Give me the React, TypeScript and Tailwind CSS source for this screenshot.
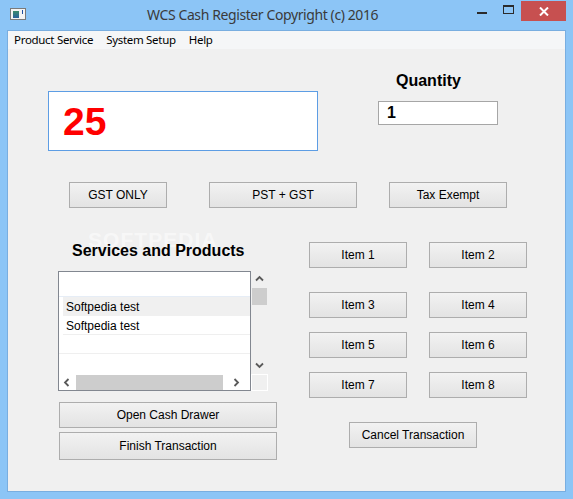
import React from 'react';

const sans = "font-['Liberation_Sans',Arial,sans-serif]";
const ui = "font-['Noto_Sans','Open_Sans',sans-serif]";

function Btn({ label, className = '' }: { label: string; className?: string }) {
  return (
    <button
      className={`h-[26px] border border-[#adadad] bg-gradient-to-b from-[#f2f2f2] to-[#e3e3e3] text-[12px] text-black ${sans} ${className}`}
    >
      {label}
    </button>
  );
}

function Chevron({ dir }: { dir: 'up' | 'down' | 'left' | 'right' }) {
  const d = {
    up: 'M1 5.5 L4.5 2 L8 5.5',
    down: 'M1 2.5 L4.5 6 L8 2.5',
    left: 'M5.5 1 L2 4.5 L5.5 8',
    right: 'M2.5 1 L6 4.5 L2.5 8',
  }[dir];
  return (
    <svg width="9" height="9" viewBox="0 0 9 9">
      <path d={d} fill="none" stroke="#5a5a5a" strokeWidth="1.8" />
    </svg>
  );
}

export default function App() {
  const items = ['Item 1', 'Item 2', 'Item 3', 'Item 4', 'Item 5', 'Item 6', 'Item 7', 'Item 8'];

  return (
    <div className="w-[573px] h-[499px] bg-[#8cc5f6] flex flex-col overflow-hidden">
      {/* title bar */}
      <div className="h-[30px] flex items-start relative">
        <div className="mt-[8px] ml-[10px] w-[16px] h-[12px] border border-[#7a7a7a] bg-[#f4f4f4] flex items-center px-[2px]">
          <div className="w-[6px] h-[7px] bg-gradient-to-b from-[#3d8a6a] to-[#2b5f9c]" />
          <div className="ml-[3px] w-[1px] h-[4px] bg-[#2050a0] self-start mt-[1px]" />
        </div>
        <div className={`ml-[121px] mt-[5px] text-[14px] tracking-[-0.4px] leading-[20px] text-[#3a3a3a] ${ui}`}>
          WCS Cash Register Copyright (c) 2016
        </div>
        <div className="ml-auto flex items-start">
          <div className="w-[26px] h-[20px] flex items-center justify-center mt-[1px]">
            <div className="w-[10px] h-[2px] bg-[#2b2b2b] mt-[4px]" />
          </div>
          <div className="w-[26px] h-[20px] flex items-center justify-center mt-[1px]">
            <div className="w-[11px] h-[9px] border border-[#2b2b2b] border-t-2 mb-[3px]" />
          </div>
          <div className="w-[45px] h-[20px] mt-[1px] mr-[7px] bg-[#c75050] flex items-center justify-center">
            <svg width="10" height="9" viewBox="0 0 10 9">
              <path d="M1 0.5 L9 8.5 M9 0.5 L1 8.5" stroke="#fff" strokeWidth="2" />
            </svg>
          </div>
        </div>
      </div>

      {/* client */}
      <div className="ml-[7px] w-[559px] h-[462px] border border-[#79aee0] bg-[#f0f0f0] flex flex-col">
        {/* menu */}
        <div className={`h-[18px] bg-[#f5f6f7] flex items-center text-[11.5px] tracking-[-0.3px] text-black ${ui}`}>
          <span className="ml-[6px]">Product Service</span>
          <span className="ml-[13px]">System Setup</span>
          <span className="ml-[13px]">Help</span>
        </div>

        <div className="relative flex-1 flex flex-col">
          {/* top row */}
          <div className="flex">
            <div className="ml-[40px] mt-[42px] w-[270px] h-[60px] border border-[#5d9de4] bg-white flex items-center pl-[14px]">
              <span className={`text-[39px] font-bold text-[#ff0000] leading-none ${sans}`}>25</span>
            </div>
            <div className="ml-[60px] mt-[23px] flex flex-col">
              <div className={`ml-[18px] text-[16px] font-bold leading-[18px] text-black ${sans}`}>Quantity</div>
              <div className="mt-[11px] w-[120px] h-[24px] border border-[#a6a6a6] bg-white flex items-center pl-[8px]">
                <span className={`text-[16px] font-bold text-black ${sans}`}>1</span>
              </div>
            </div>
          </div>

          {/* tax row */}
          <div className="flex mt-[31px]">
            <Btn label="GST ONLY" className="ml-[61px] w-[98px]" />
            <Btn label="PST + GST" className="ml-[42px] w-[148px]" />
            <Btn label="Tax Exempt" className="ml-[32px] w-[118px]" />
          </div>

          {/* lower section */}
          <div className="flex">
            <div className="ml-[50px] flex flex-col w-[219px] relative">
              <div className={`absolute left-[30px] top-[23px] text-[21px] leading-[18px] font-bold tracking-wider text-white/50 ${sans}`}>
                SOFTPEDIA
              </div>
              <div className={`relative ml-[14px] mt-[34px] text-[16px] font-bold leading-[18px] text-black ${sans}`}>
                Services and Products
              </div>
              <div className="mt-[11px] flex">
                <div className="w-[193px] h-[120px] border border-[#828790] bg-white flex flex-col">
                  <div className="h-[25px] border-b border-[#e6edf6]" />
                  <div className={`h-[19px] ml-[4px] bg-[#f0f0f0] pl-[3px] text-[12px] leading-[20px] text-black ${sans}`}>
                    Softpedia test
                  </div>
                  <div className={`h-[19px] ml-[4px] pl-[3px] text-[12px] leading-[20px] text-black border-b border-[#efefef] ${sans}`}>
                    Softpedia test
                  </div>
                  <div className="h-[19px] border-b border-[#efefef]" />
                  <div className="flex-1" />
                  <div className="h-[16px] flex items-center">
                    <div className="w-[17px] flex justify-center">
                      <Chevron dir="left" />
                    </div>
                    <div className="w-[147px] h-[15px] bg-[#cdcdcd]" />
                    <div className="flex-1 flex justify-center">
                      <Chevron dir="right" />
                    </div>
                  </div>
                </div>
                <div className="w-[17px] h-[120px] flex flex-col">
                  <div className="h-[17px] flex items-center justify-center">
                    <Chevron dir="up" />
                  </div>
                  <div className="ml-[1px] w-[15px] h-[17px] bg-[#cdcdcd]" />
                  <div className="flex-1" />
                  <div className="h-[17px] flex items-center justify-center">
                    <Chevron dir="down" />
                  </div>
                  <div className="h-[17px] border border-[#ffffff] bg-[#f0f0f0]" />
                </div>
              </div>
              <Btn label="Open Cash Drawer" className="ml-[1px] mt-[11px] w-[218px]" />
              <Btn label="Finish Transaction" className="ml-[1px] mt-[4px] w-[218px] !h-[28px]" />
            </div>

            <div className="ml-[32px] flex flex-col">
              <div className="mt-[34px] grid grid-cols-[98px_98px] gap-x-[22px]">
                {items.slice(0, 2).map((t) => (
                  <Btn key={t} label={t} />
                ))}
              </div>
              <div className="mt-[24px] grid grid-cols-[98px_98px] gap-x-[22px] gap-y-[14px]">
                {items.slice(2).map((t) => (
                  <Btn key={t} label={t} />
                ))}
              </div>
              <Btn label="Cancel Transaction" className="ml-[40px] mt-[24px] w-[128px]" />
            </div>
          </div>
        </div>
      </div>
    </div>
  );
}
